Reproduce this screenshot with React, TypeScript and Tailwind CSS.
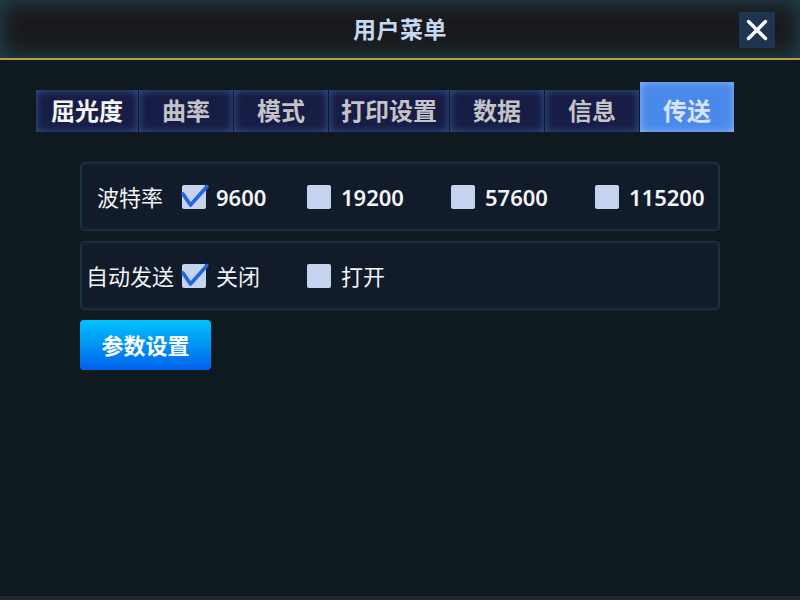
import React from "react";

const FONT = { fontFamily: '"Noto Sans", "Noto Sans CJK SC", sans-serif' };

function Check({ checked }: { checked: boolean }) {
  return (
    <div className="relative w-[24px] h-[24px] rounded-[2px] bg-[#c6d3ee] shrink-0">
      {checked && (
        <svg className="absolute left-0 top-0 overflow-visible" width="24" height="24" viewBox="0 0 24 24">
          <path d="M1 9 L8.5 20 L25 1.5" fill="none" stroke="#1f66e2" strokeWidth="3.6" strokeLinecap="round" strokeLinejoin="round" />
        </svg>
      )}
    </div>
  );
}

function Item({ checked, label, w, num }: { checked: boolean; label: string; w?: string; num?: boolean }) {
  return (
    <div className={`flex items-center gap-[10px] ${w ?? ""}`}>
      <Check checked={checked} />
      <span className={`text-[22px] leading-none text-[#f2f4f8] ${num ? "font-semibold" : "font-normal"}`}>{label}</span>
    </div>
  );
}

const tabs = [
  { t: "屈光度", w: "w-[102px]", first: true },
  { t: "曲率", w: "w-[94px]" },
  { t: "模式", w: "w-[94px]" },
  { t: "打印设置", w: "w-[120px]" },
  { t: "数据", w: "w-[94px]" },
  { t: "信息", w: "w-[94px]" },
];

export default function App() {
  return (
    <div className="w-[800px] h-[600px] bg-[#0f1a20] flex flex-col overflow-hidden" style={FONT}>
      <div className="h-[58px] bg-[#1a1a1e] shadow-[inset_0_0_22px_rgba(40,110,130,0.55)] flex items-center justify-center relative shrink-0">
        <span className="text-[23px] font-bold text-[#c6d8f2] tracking-[0.5px]">用户菜单</span>
        <div className="absolute right-[25px] top-[12px] w-[36px] h-[36px] rounded-[2px] bg-[#1e3552] flex items-center justify-center">
          <svg width="24" height="24" viewBox="0 0 24 24">
            <path d="M3.5 3.5 L20.5 20.5 M20.5 3.5 L3.5 20.5" stroke="#ffffff" strokeWidth="3.4" strokeLinecap="round" />
          </svg>
        </div>
      </div>
      <div className="h-[2px] bg-[#b8a23c] shrink-0" />
      <div className="flex-1 flex flex-col">
        <div className="flex items-end gap-[1px] ml-[36px] mt-[22px]">
          {tabs.map((tb) => (
            <div
              key={tb.t}
              className={`${tb.w} h-[42px] bg-[#181d45] shadow-[inset_0_0_8px_rgba(60,110,170,0.75)] flex items-center justify-center text-[24px] font-bold leading-none ${tb.first ? "text-[#f4f4f4]" : "text-[#c4c4c8]"}`}
            >
              {tb.t}
            </div>
          ))}
          <div className="w-[94px] h-[50px] bg-[#4a88ea] shadow-[inset_0_0_8px_rgba(150,190,250,0.9)] flex items-center justify-center pt-[8px] text-[24px] font-bold leading-none text-[#d6e4fa]">
            传送
          </div>
        </div>

        <div className="ml-[80px] w-[640px] mt-[30px] flex flex-col gap-[10px]">
          <div className="h-[69px] rounded-[4px] bg-[#111b29] border border-[#1b3547] shadow-[inset_0_0_4px_rgba(40,90,120,0.4)] flex items-center pl-[7px]">
            <div className="w-[84px] text-center text-[22px] font-normal text-[#f2f4f8] leading-none whitespace-nowrap">波特率</div>
            <div className="flex items-center ml-[10px]">
              <Item checked label="9600" w="w-[125px]" num />
              <Item checked={false} label="19200" w="w-[144px]" num />
              <Item checked={false} label="57600" w="w-[144px]" num />
              <Item checked={false} label="115200" num />
            </div>
          </div>
          <div className="h-[69px] rounded-[4px] bg-[#111b29] border border-[#1b3547] shadow-[inset_0_0_4px_rgba(40,90,120,0.4)] flex items-center pl-[7px]">
            <div className="w-[84px] flex justify-center text-[22px] font-normal text-[#f2f4f8] leading-none whitespace-nowrap">
              <span>自动发送</span>
            </div>
            <div className="flex items-center ml-[10px]">
              <Item checked label="关闭" w="w-[125px]" />
              <Item checked={false} label="打开" />
            </div>
          </div>
          <div className="w-[131px] h-[50px] rounded-[4px] bg-gradient-to-b from-[#00c2fb] to-[#0060ea] flex items-center justify-center text-[22px] font-bold text-white leading-none">
            参数设置
          </div>
        </div>
      </div>
      <div className="h-[4px] bg-[#1f292f] shrink-0" />
    </div>
  );
}
